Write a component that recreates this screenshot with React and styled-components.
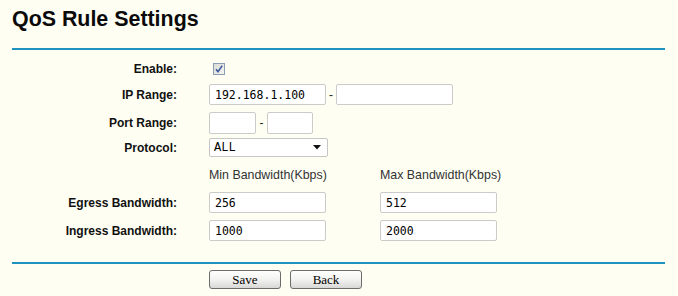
import React from "react";
import styled, { createGlobalStyle } from "styled-components";

const Global = createGlobalStyle`
  html, body { margin: 0; padding: 0; background: #fefef3; }
  body { font-family: "Liberation Sans", Arial, sans-serif; color: #000; }
  * { box-sizing: border-box; }
`;

const Page = styled.div`
  width: 678px;
  height: 296px;
  padding: 7px 13px 0 12px;
  overflow: hidden;
`;

const Title = styled.h1`
  margin: 0;
  font-size: 21.4px;
  line-height: 24px;
  font-weight: bold;
  font-family: "Liberation Sans", Arial, sans-serif;
  color: #0a0a0a;
`;

const Rule = styled.div`
  height: 2px;
  background: #1c94bf;
  margin-top: ${(p) => p.$mt}px;
`;

const Row = styled.div`
  display: grid;
  grid-template-columns: 165px 1fr;
  column-gap: 32px;
  align-items: center;
  height: ${(p) => p.$h}px;
  margin-top: ${(p) => p.$mt}px;
`;

const Label = styled.div`
  text-align: right;
  font-size: 12px;
  font-weight: bold;
  color: #111;
  white-space: nowrap;
`;

const Fields = styled.div`
  display: flex;
  align-items: center;
  gap: ${(p) => p.$gap ?? 0}px;
  height: 100%;
`;

const Dash = styled.span`
  width: ${(p) => p.$w}px;
  text-align: center;
  font-size: 12px;
  color: #222;
`;

const Input = styled.input`
  width: ${(p) => p.$w}px;
  height: ${(p) => p.$h ?? 21}px;
  border: 1px solid #cbcbc8;
  border-radius: 2px;
  background: #fff;
  padding: 0 0 0 5px;
  margin: 0;
  font-family: "DejaVu Sans Mono", "Liberation Mono", monospace;
  font-size: 11.5px;
  color: #000;
  outline: none;
`;

const Check = styled.span`
  display: inline-flex;
  align-items: center;
  justify-content: center;
  width: 12px;
  height: 12px;
  margin-left: 4px;
  border: 1px solid #8c9cb4;
  background: linear-gradient(135deg, #dcdcd6 0%, #f4f4f0 100%);
`;

const Select = styled.div`
  display: flex;
  align-items: center;
  justify-content: space-between;
  width: 119px;
  height: 19px;
  border: 1px solid #c6c6c2;
  border-radius: 2px;
  background: #fff;
  padding: 0 6px 0 4px;
  font-family: "Liberation Mono", monospace;
  font-size: 12px;
  color: #000;
`;

const Hint = styled.span`
  width: ${(p) => p.$w}px;
  font-size: 12.4px;
  color: #333;
  white-space: nowrap;
`;

const Buttons = styled.div`
  display: flex;
  gap: 9px;
  margin-top: 6px;
  padding-left: 197px;
`;

const Button = styled.button`
  width: 72px;
  height: 19px;
  margin: 0;
  padding: 0;
  border: 1px solid #6c6c6c;
  border-radius: 3px;
  background: linear-gradient(#ffffff 0%, #f2f2f0 50%, #d8d8d6 100%);
  font-family: "Liberation Serif", "Times New Roman", serif;
  font-size: 13px;
  line-height: 17px;
  color: #000;
`;

export default function App() {
  return (
    <>
      <Global />
      <Page>
        <Title>QoS Rule Settings</Title>
        <Rule $mt={17} />

        <Row $h={12} $mt={12}>
          <Label>Enable:</Label>
          <Fields>
            <Check>
              <svg width="10" height="10" viewBox="0 0 10 10">
                <path d="M2 5.2 L4 7.6 L8.2 1.6" fill="none" stroke="#3d5aa0" strokeWidth="1.6" />
              </svg>
            </Check>
          </Fields>
        </Row>

        <Row $h={21} $mt={10}>
          <Label>IP Range:</Label>
          <Fields>
            <Input $w={117} defaultValue="192.168.1.100" readOnly />
            <Dash $w={10}>-</Dash>
            <Input $w={117} defaultValue="" readOnly />
          </Fields>
        </Row>

        <Row $h={22} $mt={7}>
          <Label>Port Range:</Label>
          <Fields>
            <Input $w={47} $h={22} defaultValue="" readOnly />
            <Dash $w={11}>-</Dash>
            <Input $w={46} $h={22} defaultValue="" readOnly />
          </Fields>
        </Row>

        <Row $h={19} $mt={4}>
          <Label>Protocol:</Label>
          <Fields>
            <Select>
              <span>ALL</span>
              <svg width="8" height="5" viewBox="0 0 8 5">
                <path d="M0 0 H8 L4 4.5 Z" fill="#111" />
              </svg>
            </Select>
          </Fields>
        </Row>

        <Row $h={14} $mt={11}>
          <Label />
          <Fields>
            <Hint $w={171}>Min Bandwidth(Kbps)</Hint>
            <Hint $w={130}>Max Bandwidth(Kbps)</Hint>
          </Fields>
        </Row>

        <Row $h={21} $mt={10}>
          <Label>Egress Bandwidth:</Label>
          <Fields $gap={54}>
            <Input $w={117} defaultValue="256" readOnly />
            <Input $w={117} defaultValue="512" readOnly />
          </Fields>
        </Row>

        <Row $h={21} $mt={7}>
          <Label>Ingress Bandwidth:</Label>
          <Fields $gap={54}>
            <Input $w={117} defaultValue="1000" readOnly />
            <Input $w={117} defaultValue="2000" readOnly />
          </Fields>
        </Row>

        <Rule $mt={21} />

        <Buttons>
          <Button>Save</Button>
          <Button>Back</Button>
        </Buttons>
      </Page>
    </>
  );
}
